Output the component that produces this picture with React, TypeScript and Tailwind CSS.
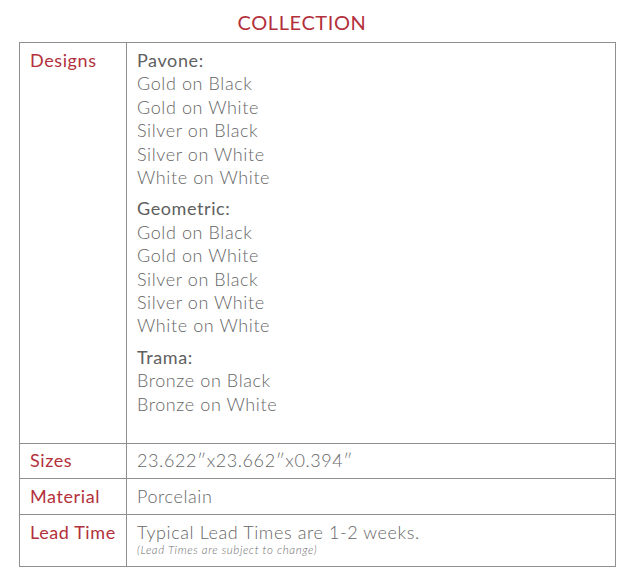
import React from "react";

const groups = [
  { name: "Pavone:", items: ["Gold on Black", "Gold on White", "Silver on Black", "Silver on White", "White on White"] },
  { name: "Geometric:", items: ["Gold on Black", "Gold on White", "Silver on Black", "Silver on White", "White on White"] },
  { name: "Trama:", items: ["Bronze on Black", "Bronze on White"] },
];

function Row({ label, h, center, children }: { label: string; h: string; center?: boolean; children: React.ReactNode }) {
  return (
    <div className={`flex border-b border-[#8f8f8f] ${h}`}>
      <div className={`w-[106px] shrink-0 pl-[10px] text-[18px] leading-[23.4px] tracking-[0.6px] text-[#b3303b] ${center ? "flex items-center" : "pt-[6px]"}`}>
        {label}
      </div>
      <div className={`flex-1 border-l border-[#8f8f8f] pl-[10px] text-[18px] leading-[23.4px] tracking-[0.6px] font-light text-[#666666] ${center ? "flex items-center" : "pt-[6px]"}`}>
        {children}
      </div>
    </div>
  );
}

export default function App() {
  return (
    <div className="w-[640px] h-[581px] bg-white" style={{ fontFamily: "Lato, 'Open Sans', sans-serif" }}>
      <div className="h-[42px] pr-[36px] flex items-center justify-center">
        <h1 className="text-[20px] tracking-[0.6px] text-[#b3303b] pt-[1px]">COLLECTION</h1>
      </div>
      <div className="ml-[19px] w-[597px] border-t border-x border-[#8f8f8f]">
        <Row label="Designs" h="h-[401px]">
          {groups.map((g, i) => (
            <div key={g.name} className={i > 0 ? "mt-[8px]" : ""}>
              <div className="text-[#606060] font-normal">{g.name}</div>
              {g.items.map((it, j) => (
                <div key={j}>{it}</div>
              ))}
            </div>
          ))}
        </Row>
        <Row label="Sizes" h="h-[35px]" center>
          23.622″x23.662″x0.394″
        </Row>
        <Row label="Material" h="h-[36px]" center>
          Porcelain
        </Row>
        <Row label="Lead Time" h="h-[52px]">
          <div>
            <div>Typical Lead Times are 1-2 weeks.</div>
            <div className="text-[11.5px] leading-[14px] italic tracking-[0.6px] font-light text-[#6e6e6e] -mt-[1px]">(Lead Times are subject to change)</div>
          </div>
        </Row>
      </div>
    </div>
  );
}
